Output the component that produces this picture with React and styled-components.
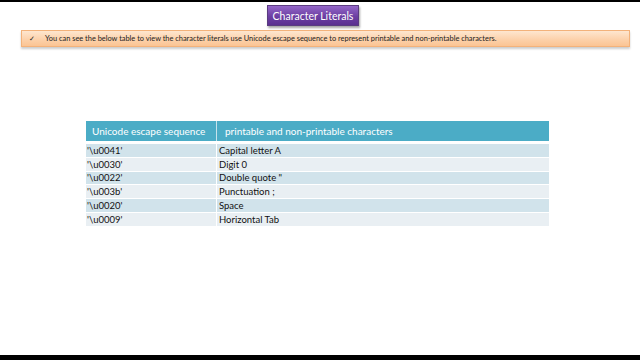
import React from 'react';
import styled, { createGlobalStyle } from 'styled-components';

const GlobalStyle = createGlobalStyle`
  html, body {
    margin: 0;
    padding: 0;
    background: #000;
  }
`;

const Screen = styled.div`
  width: 640px;
  height: 360px;
  box-sizing: border-box;
  padding: 2px 0 5px;
  background: #000;
  display: flex;
`;

const Slide = styled.div`
  flex: 1;
  background: #fff;
  display: flex;
  flex-direction: column;
  padding-top: 3px;
  font-family: Lato, "Open Sans", sans-serif;
`;

const TitleRow = styled.div`
  display: flex;
  padding-left: 267px;
`;

const Title = styled.div`
  width: 92px;
  height: 21px;
  box-sizing: border-box;
  display: flex;
  align-items: center;
  justify-content: center;
  color: #fff;
  font-size: 10.5px;
  background: linear-gradient(#9467c8, #6c3fa3 55%, #5b3090);
  border: 1px solid #5a3c80;
  box-shadow: 1px 2px 2px rgba(0, 0, 0, 0.35);
`;

const Bar = styled.div`
  margin: 4px 10px 0 21px;
  height: 17px;
  box-sizing: border-box;
  display: flex;
  align-items: center;
  background: linear-gradient(#fee6cf, #fcd0a8 60%, #fbc493);
  border: 1px solid #f3b27a;
  box-shadow: 0 2px 2px rgba(0, 0, 0, 0.2);
  font-size: 7.4px;
  color: #222;
`;

const Check = styled.span`
  width: 16px;
  padding-left: 7px;
  font-size: 7px;
`;

const TableWrap = styled.div`
  margin: 74px 0 0 86px;
  width: 463px;
  display: flex;
  flex-direction: column;
`;

const HeadRow = styled.div`
  display: grid;
  grid-template-columns: 130px 1fr;
  height: 20px;
  background: #4bacc6;
  border-bottom: 3px solid #fff;
  color: #fff;
  font-size: 10px;
`;

const HeadCell = styled.div`
  display: flex;
  align-items: center;
  padding-left: ${p => p.$pad}px;
  border-left: ${p => (p.$divide ? '1px solid #c6e3ec' : 'none')};
`;

const Row = styled.div`
  display: grid;
  grid-template-columns: 130px 1fr;
  height: 12.75px;
  margin-bottom: 1px;
  background: ${p => (p.$odd ? '#d1e3eb' : '#e9eff3')};
  font-size: 9.5px;
  color: #111;
`;

const Cell = styled.div`
  display: flex;
  align-items: center;
  padding-left: ${p => (p.$divide ? 2 : 1)}px;
  border-left: ${p => (p.$divide ? '1px solid #fff' : 'none')};
  white-space: pre;
`;

const rows = [
  ["'\\u0041'", 'Capital letter A'],
  ["'\\u0030'", 'Digit 0'],
  ["'\\u0022'", 'Double quote "'],
  ["'\\u003b'", 'Punctuation ;'],
  ["'\\u0020'", 'Space'],
  ["'\\u0009'", 'Horizontal Tab'],
];

export default function App() {
  return (
    <>
      <GlobalStyle />
      <Screen>
        <Slide>
          <TitleRow>
            <Title>Character Literals</Title>
          </TitleRow>
          <Bar>
            <Check>✓</Check>
            You can see the below table to view the character literals use Unicode escape sequence to represent printable and non-printable characters.
          </Bar>
          <TableWrap>
            <HeadRow>
              <HeadCell $pad={6}>Unicode escape sequence</HeadCell>
              <HeadCell $pad={8} $divide>printable and non-printable characters</HeadCell>
            </HeadRow>
            {rows.map(([code, desc], i) => (
              <Row key={code} $odd={i % 2 === 0}>
                <Cell>{code}</Cell>
                <Cell $divide>{desc}</Cell>
              </Row>
            ))}
          </TableWrap>
        </Slide>
      </Screen>
    </>
  );
}
